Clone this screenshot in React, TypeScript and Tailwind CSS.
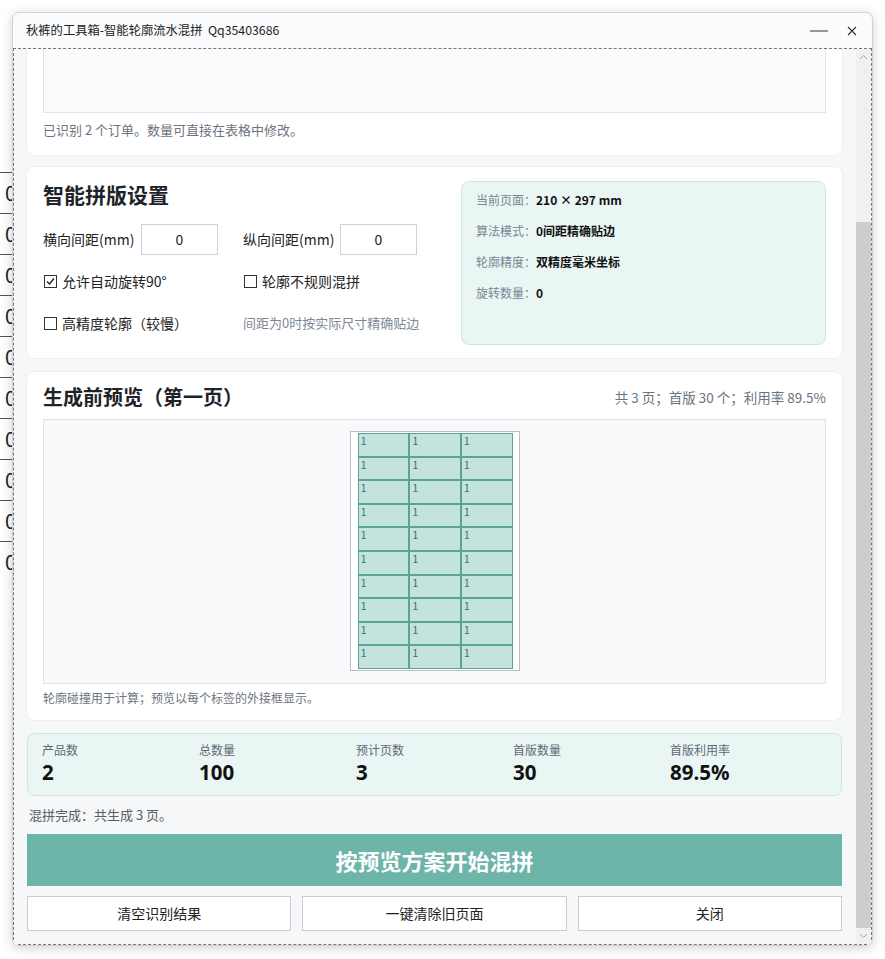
import React from 'react';

const FONT = { fontFamily: '"Noto Sans CJK SC", "Noto Sans", sans-serif' };

function Checkbox({ checked }: { checked?: boolean }) {
  return (
    <span className="inline-flex h-[13px] w-[13px] items-center justify-center border border-[#333] bg-white">
      {checked && (
        <svg width="11" height="11" viewBox="0 0 11 11">
          <path d="M2 5.5 L4.5 8 L9 2.5" fill="none" stroke="#222" strokeWidth="1.4" />
        </svg>
      )}
    </span>
  );
}

function InfoRow({ label, value }: { label: string; value: string }) {
  return (
    <div className="flex h-[31px] items-center text-[12px]">
      <span className="text-[#7a8592]">{label}</span>
      <span className="font-bold text-[#111]">{value}</span>
    </div>
  );
}

const stats = [
  { label: '产品数', value: '2' },
  { label: '总数量', value: '100' },
  { label: '预计页数', value: '3' },
  { label: '首版数量', value: '30' },
  { label: '首版利用率', value: '89.5%' },
];

export default function App() {
  const cells = Array.from({ length: 30 });
  return (
    <div className="relative h-[959px] w-[885px] overflow-hidden bg-white" style={FONT}>
      {/* table behind the dialog */}
      <div className="absolute left-0 top-[172px] w-[60px]">
        {Array.from({ length: 10 }).map((_, i) => (
          <div key={i} className="flex h-[41px] items-center border-t border-[#555] pl-[5px] text-[20px] leading-none text-[#222]">
            0
          </div>
        ))}
      </div>

      {/* dialog window */}
      <div className="absolute left-[12px] top-[12px] flex h-[934px] w-[861px] flex-col overflow-hidden rounded-[7px] border border-[#cfd2d6] bg-[#fafbfc] shadow-[0_2px_12px_rgba(0,0,0,0.18)]">
        <div className="flex h-[35px] shrink-0 items-center pl-[13px] pr-[12px]">
          <span className="flex-1 text-[12.3px] text-[#222]">秋裤的工具箱-智能轮廓流水混拼&nbsp;&nbsp;Qq35403686</span>
          <svg width="20" height="10" viewBox="0 0 20 10" className="mr-[17px]">
            <path d="M1 5 H19" stroke="#333" strokeWidth="1" />
          </svg>
          <svg width="12" height="12" viewBox="0 0 12 12" className="mr-[2px]">
            <path d="M2 2 L10 10 M10 2 L2 10" stroke="#333" strokeWidth="1.1" />
          </svg>
        </div>

        <div className="flex min-h-0 flex-1 border border-dashed border-[#777] bg-[#f5f7f9]">
          <div className="flex min-w-0 flex-1 flex-col overflow-hidden pl-[13px] pr-[14px]">
            {/* card 1 (scrolled) */}
            <div className="mt-[-33px] rounded-lg bg-white px-4 pb-[15px] pt-4 shadow-[0_0_0_1px_rgba(0,0,0,0.03)]">
              <div className="h-[81px] border border-[#e1e4e8] bg-[#fafbfc]" />
              <p className="mt-[7px] text-[13px] leading-5 text-[#6b7480]">已识别 2 个订单。数量可直接在表格中修改。</p>
            </div>

            {/* card 2 settings */}
            <div className="mt-[12px] flex h-[191px] rounded-lg bg-white px-4 pt-[14px] shadow-[0_0_0_1px_rgba(0,0,0,0.03)]">
              <div className="w-[418px]">
                <div className="text-[21px] font-bold leading-[26px] text-[#1f2328]">智能拼版设置</div>
                <div className="mt-[17px] grid grid-cols-[200px_200px] text-[14px] text-[#222]">
                  <div className="flex items-center">
                    <span className="w-[98px]">横向间距(mm)</span>
                    <div className="flex h-[31px] w-[77px] items-center justify-center border border-[#cfd3d8] bg-white text-[14px]">0</div>
                  </div>
                  <div className="flex items-center">
                    <span className="w-[97px]">纵向间距(mm)</span>
                    <div className="flex h-[31px] w-[77px] items-center justify-center border border-[#cfd3d8] bg-white text-[14px]">0</div>
                  </div>
                  <label className="mt-[16px] flex h-5 items-center gap-[5px] pl-[1px]">
                    <Checkbox checked />
                    <span>允许自动旋转90°</span>
                  </label>
                  <label className="mt-[16px] flex h-5 items-center gap-[5px] pl-[1px]">
                    <Checkbox />
                    <span>轮廓不规则混拼</span>
                  </label>
                  <label className="mt-[22px] flex h-5 items-center gap-[5px] pl-[1px]">
                    <Checkbox />
                    <span>高精度轮廓（较慢）</span>
                  </label>
                  <div className="mt-[22px] flex h-5 items-center text-[13px] text-[#7d8894]">间距为0时按实际尺寸精确贴边</div>
                </div>
              </div>
              <div className="h-[164px] flex-1 rounded-lg border border-[#cde6e0] bg-[#eaf6f4] px-[14px] pt-[2px]">
                <InfoRow label="当前页面：" value="210 × 297 mm" />
                <InfoRow label="算法模式：" value="0间距精确贴边" />
                <InfoRow label="轮廓精度：" value="双精度毫米坐标" />
                <InfoRow label="旋转数量：" value="0" />
              </div>
            </div>

            {/* card 3 preview */}
            <div className="mt-[14px] rounded-lg bg-white px-4 pb-[14px] pt-[12px] shadow-[0_0_0_1px_rgba(0,0,0,0.03)]">
              <div className="flex h-[26px] items-center justify-between">
                <span className="text-[20px] font-bold text-[#1f2328]">生成前预览（第一页）</span>
                <span className="text-[13.5px] text-[#6b7480]">共 3 页；首版 30 个；利用率 89.5%</span>
              </div>
              <div className="mt-[9px] flex h-[265px] justify-center border border-[#dfe3e8] bg-[#f7f9fb] pt-[11px]">
                <div className="h-[240px] w-[170px] border border-[#b9bec4] bg-white pl-[7px] pt-[1px]">
                  <div className="grid h-[236px] w-[155px] grid-cols-3 grid-rows-10">
                    {cells.map((_, i) => (
                      <div key={i} className="border border-[#5aa495] bg-[#c5e3dd] pl-[2px] text-[11px] leading-[12px] text-[#3a7a6d]">
                        1
                      </div>
                    ))}
                  </div>
                </div>
              </div>
              <p className="mt-[6px] text-[12px] leading-4 text-[#6b7480]">轮廓碰撞用于计算；预览以每个标签的外接框显示。</p>
            </div>

            {/* stats */}
            <div className="mt-[13px] grid h-[63px] grid-cols-5 rounded-lg border border-[#cfe6e0] bg-[#eaf6f4] px-[14px] pt-[7px]">
              {stats.map(s => (
                <div key={s.label}>
                  <div className="text-[12px] leading-[17px] text-[#5f6975]">{s.label}</div>
                  <div className="mt-[3px] text-[20.5px] font-bold leading-[22px] text-[#111]" style={{ fontFamily: '"Noto Sans", sans-serif' }}>
                    {s.value}
                  </div>
                </div>
              ))}
            </div>

            <p className="mt-[9px] pl-[2px] text-[13px] leading-5 text-[#555d66]">混拼完成：共生成 3 页。</p>

            <button className="mt-[9px] h-[52px] w-full bg-[#6db5a9] text-[22px] font-bold text-white">按预览方案开始混拼</button>

            <div className="mt-[10px] grid grid-cols-3 gap-[11px]">
              {['清空识别结果', '一键清除旧页面', '关闭'].map(t => (
                <button key={t} className="h-[35px] border border-[#c9cdd2] bg-white text-[14px] text-[#222]">
                  {t}
                </button>
              ))}
            </div>
          </div>

          {/* scrollbar */}
          <div className="flex w-[15px] shrink-0 flex-col bg-[#f0f0f0]">
            <div className="flex h-[16px] items-center justify-center">
              <svg width="9" height="6" viewBox="0 0 9 6">
                <path d="M1 5 L4.5 1.5 L8 5" fill="none" stroke="#a3a3a3" strokeWidth="1" />
              </svg>
            </div>
            <div className="h-[157px]" />
            <div className="flex-1 bg-[#cdcdcd]" />
            <div className="flex h-[16px] items-center justify-center">
              <svg width="9" height="6" viewBox="0 0 9 6">
                <path d="M1 1 L4.5 4.5 L8 1" fill="none" stroke="#a3a3a3" strokeWidth="1" />
              </svg>
            </div>
          </div>
        </div>
      </div>
    </div>
  );
}
